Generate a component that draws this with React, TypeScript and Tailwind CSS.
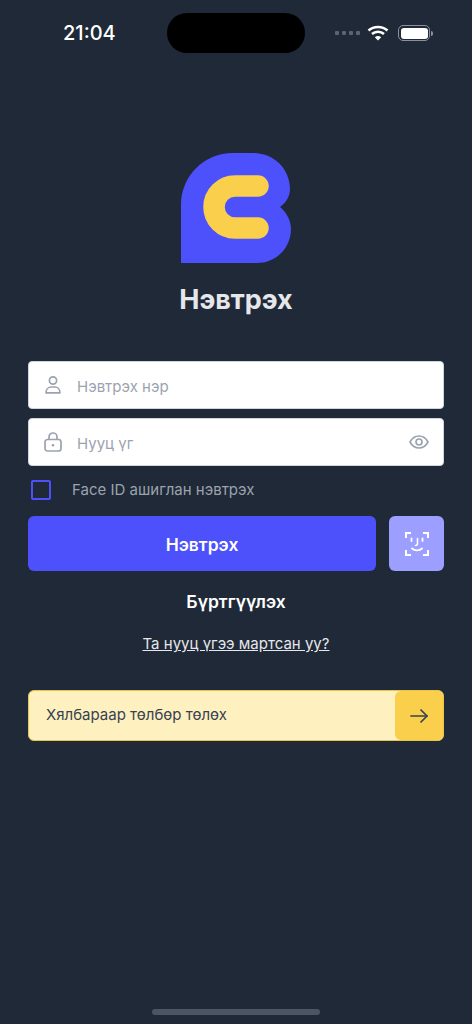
const Logo = () => (
  <svg width="110" height="110" viewBox="0 0 110 110">
    <path
      d="M0 110V52C0 23 23 0 52 0H72C93 0 109 16 109 36C109 43 105 50 99 54C106 60 110 68 110 76C110 95 95 110 76 110Z"
      fill="#4c51fb"
    />
    <path d="M77 33H54A21 21 0 0 0 54 75H77" fill="none" stroke="#f9cf4b" strokeWidth="21.5" strokeLinecap="round" />
  </svg>
);

const UserIcon = () => (
  <svg width="16" height="20" viewBox="0 0 16 20" fill="none" stroke="#9ca3af" strokeWidth="1.7">
    <circle cx="8" cy="5.5" r="3.6" />
    <path d="M1 17.8C1 14 3.6 12 6 12H10C12.4 12 15 14 15 17.8Z" strokeLinejoin="round" />
  </svg>
);

const LockIcon = () => (
  <svg width="18" height="20" viewBox="0 0 18 20" fill="none" stroke="#9ca3af" strokeWidth="1.7">
    <rect x="1" y="7.5" width="16" height="11.5" rx="2.5" />
    <path d="M5 7.5V5A4 4 0 0 1 13 5V7.5" />
    <circle cx="9" cy="13.2" r="1.3" fill="#9ca3af" stroke="none" />
  </svg>
);

const EyeIcon = () => (
  <svg width="20" height="14" viewBox="0 0 20 14" fill="none" stroke="#9ca3af" strokeWidth="1.7">
    <path d="M1 7C3 3.2 6.2 1 10 1C13.8 1 17 3.2 19 7C17 10.8 13.8 13 10 13C6.2 13 3 10.8 1 7Z" strokeLinejoin="round" />
    <circle cx="10" cy="7" r="3" />
  </svg>
);

const FaceIcon = () => (
  <svg width="24" height="24" viewBox="0 0 24 24" fill="none" stroke="#fff" strokeWidth="2">
    <path d="M6 1H1V6" />
    <path d="M18 1H23V6" />
    <path d="M1 18V23H6" />
    <path d="M23 18V23H18" />
    <path d="M6.5 6.5V9" strokeWidth="1.8" strokeLinecap="round" />
    <path d="M17.5 6.5V9" strokeWidth="1.8" strokeLinecap="round" />
    <path d="M12.5 6.5V11.5C12.5 13 11.5 13.5 10.5 13.5" strokeWidth="1.6" strokeLinecap="round" />
    <path d="M7 16.5C9.5 19 14.5 19 17 16.5" strokeWidth="1.8" strokeLinecap="round" />
  </svg>
);

const ArrowIcon = () => (
  <svg width="18" height="14" viewBox="0 0 18 14" fill="none" stroke="#374151" strokeWidth="1.7" strokeLinecap="round" strokeLinejoin="round">
    <path d="M1 7H17" />
    <path d="M11 1L17 7L11 13" />
  </svg>
);

const StatusBar = () => (
  <div className="flex h-[40px] items-center pl-[63px] pr-[39px]">
    <span className="w-[104px] text-[20px] leading-[38px] font-medium text-white">21:04</span>
    <div className="h-[40px] w-[138px] rounded-[20px] bg-black" />
    <div className="ml-[30px] flex items-center">
      <div className="flex gap-[3px]">
        <span className="h-[4px] w-[4px] rounded-[1px] bg-[#5b6472]" />
        <span className="h-[4px] w-[4px] rounded-[1px] bg-[#5b6472]" />
        <span className="h-[4px] w-[4px] rounded-[1px] bg-[#5b6472]" />
        <span className="h-[4px] w-[4px] rounded-[1px] bg-[#5b6472]" />
      </div>
      <svg className="ml-[7px]" width="22" height="16" viewBox="0 0 22 16" fill="none" stroke="#fff" strokeWidth="2.6">
        <path d="M1.5 5.5C6.8 .8 15.2 .8 20.5 5.5" />
        <path d="M5 9C8.4 6 13.6 6 17 9" />
        <path d="M11 15.5L7.8 12.2C9.6 10.6 12.4 10.6 14.2 12.2Z" fill="#fff" stroke="none" />
      </svg>
      <div className="ml-[9px] flex items-center">
        <div className="flex h-[16px] w-[32px] items-center justify-center rounded-[5px] border border-[#8a919c]">
          <div className="h-[11px] w-[27px] rounded-[3px] bg-white" />
        </div>
        <div className="ml-[1px] h-[5px] w-[1.5px] rounded-r bg-[#8a919c]" />
      </div>
    </div>
  </div>
);

export default function App() {
  return (
    <div
      className="flex h-[1024px] flex-col bg-[#1f2937] pt-[13px]"
      style={{ fontFamily: 'Inter, "Noto Sans", sans-serif' }}
    >
      <StatusBar />

      <div className="flex flex-1 flex-col px-[28px]">
        <div className="mt-[100px] flex flex-col items-center">
          <Logo />
          <h1 className="mt-[21px] text-[27px] leading-[32px] font-bold text-[#e5e7eb]">Нэвтрэх</h1>
        </div>

        <div className="mt-[45px] flex h-[48px] items-center rounded-[4px] border border-[#d1d5db] bg-white pl-[16px]">
          <UserIcon />
          <span className="ml-[16px] pt-[4px] text-[15px] text-[#9ca3af]">Нэвтрэх нэр</span>
        </div>

        <div className="mt-[9px] flex h-[48px] items-center rounded-[4px] border border-[#d1d5db] bg-white pl-[15px] pr-[14px]">
          <LockIcon />
          <span className="ml-[15px] flex-1 pt-[5px] text-[15px] text-[#9ca3af]">Нууц үг</span>
          <EyeIcon />
        </div>

        <div className="mt-[14px] flex items-center pl-[3px]">
          <div className="h-[20px] w-[20px] rounded-[2px] border-2 border-[#4c51fb]" />
          <span className="ml-[21px] text-[15px] leading-[20px] text-[#9ca3af]">Face ID ашиглан нэвтрэх</span>
        </div>

        <div className="mt-[16px] flex gap-[13px]">
          <button className="h-[55px] flex-1 rounded-[6px] bg-[#4c51fb] pt-[3px] text-[17.5px] font-semibold text-white">
            Нэвтрэх
          </button>
          <button className="flex h-[55px] w-[55px] items-center justify-center rounded-[6px] bg-[#9c9fff]">
            <FaceIcon />
          </button>
        </div>

        <div className="mt-[21px] text-center text-[17.5px] leading-[20px] font-semibold text-white">Бүртгүүлэх</div>

        <div className="mt-[22px] text-center text-[15px] leading-[20px] text-[#e5e7eb] underline">
          Та нууц үгээ мартсан уу?
        </div>

        <div className="mt-[36px] flex h-[51px] items-center overflow-hidden rounded-[6px] border border-[#e9c44a] bg-[#fef1bf] pl-[17px]">
          <span className="flex-1 text-[15px] text-[#374151]">Хялбараар төлбөр төлөх</span>
          <div className="flex h-full w-[48px] items-center justify-center rounded-l-[6px] bg-[#f9cf4b]">
            <ArrowIcon />
          </div>
        </div>
      </div>

      <div className="mb-[9px] flex justify-center">
        <div className="h-[6px] w-[168px] rounded-full bg-[#4b5563]" />
      </div>
    </div>
  );
}
